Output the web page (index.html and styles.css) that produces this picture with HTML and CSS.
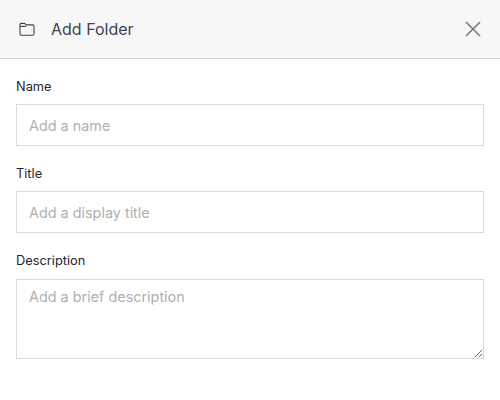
FILE: index.html
```html
<!DOCTYPE html>
<html lang="en">
<head>
    <meta charset="UTF-8">
    <title>Add Folder</title>
    <link rel="stylesheet" href="styles.css">
</head>
<body>
    <div class="modal">
        <div class="modal-header">
            <div class="header-title">
                <svg class="folder-icon" width="16" height="16" viewBox="0 0 16 16" fill="none" stroke="#3b4450" stroke-width="1.1" stroke-linejoin="round">
                    <path d="M1 12.8V3.6c0-.7.5-1.2 1.2-1.2h3c.4 0 .7.1 1 .4l1 1.1h6.4c.8 0 1.4.6 1.4 1.4v7.5c0 .8-.6 1.4-1.4 1.4H2.4c-.8 0-1.4-.6-1.4-1.4z"/>
                    <path d="M1 5.4h6.2"/>
                </svg>
                <span>Add Folder</span>
            </div>
            <button class="close-button" aria-label="Close">
                <svg width="16" height="16" viewBox="0 0 16 16" fill="none" stroke="#7a7a7a" stroke-width="1.6">
                    <path d="M1 1l14 14M15 1L1 15"/>
                </svg>
            </button>
        </div>
        <form class="modal-body">
            <div class="field">
                <label for="name">Name</label>
                <input type="text" id="name" placeholder="Add a name">
            </div>
            <div class="field">
                <label for="title">Title</label>
                <input type="text" id="title" placeholder="Add a display title">
            </div>
            <div class="field">
                <label for="description">Description</label>
                <textarea id="description" placeholder="Add a brief description"></textarea>
            </div>
        </form>
    </div>
</body>
</html>
```

FILE: styles.css
```css
body {
    margin: 0;
    background: white;
    font-family: Inter, Arial, sans-serif;
    color: #1f2630;
}
.modal-header {
    display: flex;
    justify-content: space-between;
    align-items: center;
    height: 58px;
    padding: 0 19px;
    background: #f7f7f7;
    border-bottom: 1px solid #d4d4d4;
}
.header-title {
    display: flex;
    align-items: center;
    gap: 16px;
    font-size: 16px;
    color: #3b4450;
}
.close-button {
    display: flex;
    padding: 0;
    background: none;
    border: none;
    cursor: pointer;
}
.modal-body {
    padding: 19.6px 16px;
}
.field {
    margin-bottom: 20px;
}
.field label {
    display: block;
    margin-bottom: 9.4px;
    font-size: 12.8px;
    line-height: 16px;
}
.field input,
.field textarea {
    display: block;
    box-sizing: border-box;
    width: 468px;
    padding: 0 12px;
    border: 1px solid #dadada;
    font-family: Inter, Arial, sans-serif;
    font-size: 14.4px;
    color: #1f2630;
    outline: none;
}
.field input {
    height: 42px;
    padding-top: 1px;
}
.field textarea {
    height: 80px;
    padding-top: 8px;
}
.field input::placeholder,
.field textarea::placeholder {
    color: #b0b0b0;
    opacity: 1;
}
```
